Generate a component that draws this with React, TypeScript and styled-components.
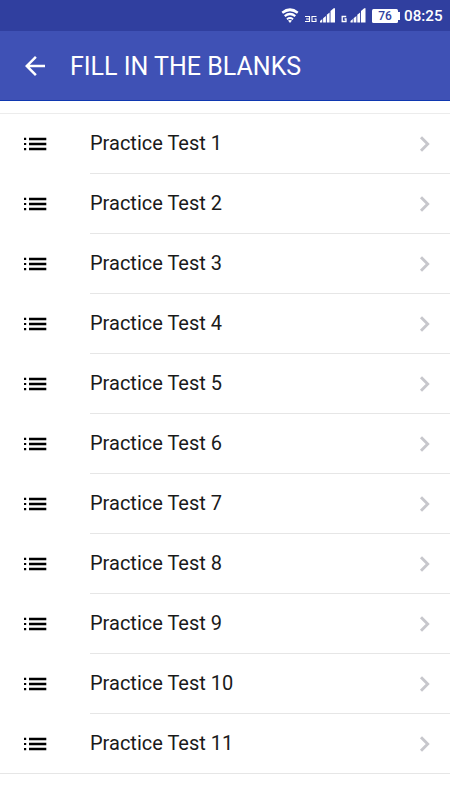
import React from 'react';
import styled, { createGlobalStyle } from 'styled-components';

const GlobalStyle = createGlobalStyle`
  * { box-sizing: border-box; }
  body { margin: 0; background: #fff; font-family: Roboto, sans-serif; }
`;

const Screen = styled.div`
  width: 450px;
  height: 800px;
  overflow: hidden;
  background: #fff;
`;

const StatusBar = styled.div`
  display: flex;
  align-items: center;
  height: 31px;
  padding: 0 8px 0 281px;
  background: #303f9f;
  color: #fff;
`;

const StatusIcons = styled.svg`
  display: block;
  flex: none;
`;

const Battery = styled.div`
  display: flex;
  align-items: center;
  margin-left: 6px;
`;

const BatteryBody = styled.div`
  width: 26px;
  height: 14px;
  border-radius: 1.5px;
  background: #fff;
  color: #303f9f;
  font-size: 12px;
  font-weight: 500;
  line-height: 14px;
  text-align: center;
`;

const BatteryTip = styled.div`
  width: 2px;
  height: 8px;
  background: #fff;
`;

const Clock = styled.div`
  margin: 1px 0 0 4px;
  font-size: 15.2px;
  font-weight: 500;
  white-space: nowrap;
`;

const Header = styled.header`
  display: flex;
  align-items: center;
  height: 70px;
  padding-left: 20px;
  background: #3f51b5;
  border-bottom: 1px solid #1038b0;
  color: #fff;
`;

const Title = styled.h1`
  margin: 3px 0 0 20px;
  font-size: 25px;
  font-weight: 400;
  line-height: 30px;
`;

const List = styled.ul`
  margin: 12px 0 0;
  padding: 0;
  list-style: none;
  border-top: 1px solid #ececec;
  border-bottom: 1px solid #e6e6e6;
`;

const Row = styled.li`
  display: flex;
  height: 60px;
  padding-left: 20px;

  &:last-child { height: 59px; }
  &:last-child > div { border-bottom: none; }
`;

const ListIcon = styled.svg`
  flex: none;
  margin-top: 15px;
`;

const RowBody = styled.div`
  display: flex;
  flex: 1;
  justify-content: space-between;
  margin-left: 40px;
  padding-right: 20px;
  border-bottom: 1px solid #e6e6e6;
`;

const Label = styled.span`
  font-size: 20px;
  line-height: 59px;
  color: #1a1a1a;
`;

const Chevron = styled.svg`
  margin-top: 22px;
`;

const SIGNAL_BARS = 'M39 22.5v-1.6l2.3-1.8v3.4zM42.1 22.5v-4.3l2.8-2.3v6.6zM45.8 22.5v-7.7l2.8-2.3v10zM49.5 22.5v-11.6l3.2-2.6h1.3v14.2z';

const tests = Array.from({ length: 11 }, (_, i) => `Practice Test ${i + 1}`);

export default function App() {
  return (
    <Screen>
      <GlobalStyle />
      <StatusBar>
        <StatusIcons width="85" height="31" viewBox="0 0 85 31" fill="#fff">
          <path d="M9 23 7 20.4Q9 19.4 11 20.4ZM5.4 18.5Q9 15.6 12.6 18.5L11.6 19.9Q9 18.1 6.4 19.9ZM3 15.3Q9 10.4 15 15.3L13.6 17Q9 13.3 4.4 17ZM.5 11.7Q9 5 17.5 11.7L16 13.8Q9 8.5 2 13.8Z" />
          <path d="M24 16.5h4.5v5h-4.5M25 19h3.5M35.5 16.5h-4.5v5h4v-2.5h-1.5" fill="none" stroke="#fff" strokeWidth="1.1" />
          <path d={SIGNAL_BARS} />
          <path d="M65.2 16.5h-4v5h3.8v-2.5h-1.5" fill="none" stroke="#fff" strokeWidth="1.3" />
          <path d={SIGNAL_BARS} transform="translate(30.5 0)" />
        </StatusIcons>
        <Battery>
          <BatteryBody>76</BatteryBody>
          <BatteryTip />
        </Battery>
        <Clock>08:25</Clock>
      </StatusBar>
      <Header>
        <svg width="30" height="30" viewBox="0 0 24 24" fill="#fff">
          <path d="M20 11H7.83l5.59-5.59L12 4l-8 8 8 8 1.41-1.41L7.83 13H20z" />
        </svg>
        <Title>FILL IN THE BLANKS</Title>
      </Header>
      <List>
        {tests.map((name) => (
          <Row key={name}>
            <ListIcon width="30" height="30" viewBox="0 0 30 30" fill="#000">
              <path d="M4 8.8h2.2v2.2H4zM4 13.9h2.2v2.2H4zM4 19h2.2v2.2H4zM9 8.7h17.3v2.5H9zM9 13.7h17.3v2.5H9zM9 18.8h17.3v2.5H9z" />
            </ListIcon>
            <RowBody>
              <Label>{name}</Label>
              <Chevron width="11" height="16" viewBox="0 0 11 16" fill="none" stroke="#c7c7cc" strokeWidth="2.9">
                <path d="M2 1.2 8.7 8 2 14.8" />
              </Chevron>
            </RowBody>
          </Row>
        ))}
      </List>
    </Screen>
  );
}
